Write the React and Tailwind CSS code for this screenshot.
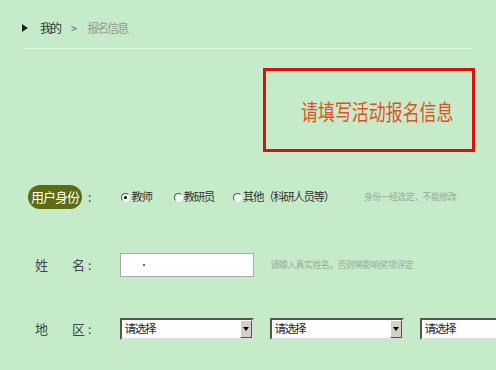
const font = { fontFamily: '"Noto Sans CJK SC", "Noto Sans", sans-serif' };

const Radio = ({ checked, label }) => (
  <label className="flex items-center text-[11.5px] tracking-[-1.4px] text-[#333]">
    <span className="relative w-[9px] h-[9px] rounded-full border border-t-[#555] border-l-[#555] border-r-[#eee] border-b-[#eee] bg-[#f6f6f6] mr-[1px] flex items-center justify-center">
      {checked && <span className="w-[3px] h-[3px] rounded-full bg-black" />}
    </span>
    {label}
  </label>
);

const Select = ({ w = 'w-[134px]' }) => (
  <div className={`${w} h-[22px] bg-white border-2 border-t-[#555] border-l-[#555] border-r-[#ddd] border-b-[#ddd] flex items-center shrink-0`}>
    <span className="flex-1 pl-[2px] text-[11.5px] tracking-[-1.2px] text-[#222]">请选择</span>
    <span className="w-[12px] h-[18px] bg-[#d4d0c8] border border-t-white border-l-white border-r-[#555] border-b-[#555] flex items-center justify-center">
      <svg width="6" height="4" viewBox="0 0 6 4"><path d="M0 0h6L3 4z" fill="#000" /></svg>
    </span>
  </div>
);

export default function App() {
  return (
    <div className="w-[496px] h-[370px] overflow-hidden bg-[#c5ebc8]" style={font}>
      <div className="mx-[22px] pt-[20px] pb-[12px] border-b border-[#e4f6e4] flex items-center h-[49px]">
        <svg width="6" height="8" viewBox="0 0 6 8" className="mr-[12px]"><path d="M0 0l6 4-6 4z" fill="#222" /></svg>
        <span className="text-[12px] tracking-[-2px] text-[#333]">我的</span>
        <span className="text-[11px] text-[#666] ml-[11px] mr-[10px]">&gt;</span>
        <span className="text-[12px] tracking-[-2px] text-[#999]">报名信息</span>
      </div>

      <div className="ml-[263px] mt-[19px] w-[212px] h-[84px] border-[3px] border-[#e00f0f] flex items-center pl-[35px]">
        <span className="inline-block whitespace-nowrap origin-left scale-x-[0.77] text-[22px] text-[#e2501f] leading-none">请填写活动报名信息</span>
      </div>

      <div className="mt-[33px] flex items-center h-[24px]">
        <div className="ml-[28px] w-[54px] h-[24px] rounded-full bg-[#5d6b14] flex items-center justify-center text-[13px] tracking-[-1px] text-white">用户身份</div>
        <span className="ml-[6px] text-[12px] text-[#445]">:</span>
        <div className="ml-[30px] flex items-center">
          <Radio checked label="教师" />
          <div className="ml-[22px]"><Radio label="教研员" /></div>
          <div className="ml-[19px]"><Radio label="其他（科研人员等）" /></div>
        </div>
        <span className="ml-[30px] text-[9px] tracking-[-0.6px] text-[#9aaa9a]">身份一经选定，不能修改</span>
      </div>

      <div className="mt-[44px] flex items-center h-[24px]">
        <span className="ml-[35px] text-[13px] text-[#445]">姓</span>
        <span className="ml-[24px] text-[13px] text-[#445]">名</span>
        <span className="ml-[3px] text-[12px] text-[#445]">:</span>
        <div className="ml-[29px] w-[134px] h-[24px] bg-white border border-[#aaa] flex items-center pl-[22px]">
          <span className="w-[2px] h-[2px] bg-[#666]" />
        </div>
        <span className="ml-[16px] text-[9px] tracking-[-0.6px] text-[#9aaa9a]">请输入真实姓名，否则将影响奖项评定</span>
      </div>

      <div className="mt-[41px] flex items-center h-[22px]">
        <span className="ml-[35px] text-[13px] text-[#445]">地</span>
        <span className="ml-[24px] text-[13px] text-[#445]">区</span>
        <span className="ml-[3px] text-[12px] text-[#445]">:</span>
        <div className="ml-[29px] flex items-center gap-[16px]">
          <Select />
          <Select />
          <Select />
        </div>
      </div>
    </div>
  );
}
